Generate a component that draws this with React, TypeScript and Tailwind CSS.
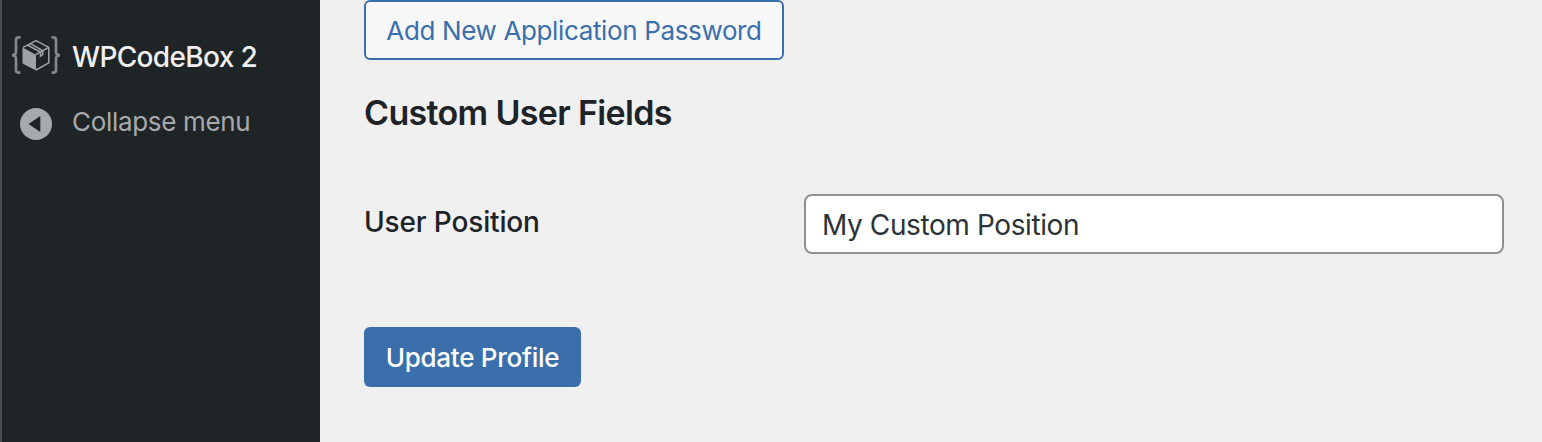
export default function App() {
  return (
    <div className="flex h-[442px] w-[1542px] overflow-hidden bg-[#f0f0f0] font-['Inter',sans-serif] text-[#1d2327]">
      <aside className="w-80 shrink-0 border-l-2 border-[#4a4e51] bg-[#1f2427] pt-[30px]">
        <a className="flex h-[52px] items-center pl-[10px] text-[28px] text-[#f0f0f1]">
          <svg width="48" height="40" viewBox="0 0 48 40" fill="none" className="shrink-0 overflow-visible">
            <path d="M8.5 1.4H6.8Q4 1.4 4 4V15.5Q4 19.2 0 19.2Q4 19.2 4 23V34Q4 36.7 6.8 36.7H8.5M39.5 1.4H41.2Q44 1.4 44 4V15.5Q44 19.2 48 19.2Q44 19.2 44 23V34Q44 36.7 41.2 36.7H39.5" stroke="#85888b" strokeWidth="2.7" />
            <path d="M10.5 11.5L24 18.8V34.5L10.5 27.5Z" fill="#a0a3a6" />
            <path d="M11 11.3L24 4.6L36.8 11.3V26.8L24 34M24 18.5L36.8 11.3" stroke="#a0a3a6" strokeWidth="1.5" strokeLinejoin="round" />
            <path d="M15.3 9L28.5 16V20.2L30.8 18.7V14.8L18.5 7.6" stroke="#a0a3a6" strokeWidth="1.5" />
          </svg>
          <span className="ml-3 pt-px font-medium tracking-[-0.66px]">WPCodeBox 2</span>
        </a>
        <a className="mt-[14px] flex h-[52px] items-center pl-[18px] text-[26px] text-[#a7aaad]">
          <svg width="32" height="32" viewBox="0 0 32 32" className="relative top-[2px]"><circle cx="16" cy="16" r="16" fill="#a7aaad" /><path d="M8.5 16L20.3 8V24Z" fill="#1f2427" /></svg>
          <span className="ml-5 pb-px tracking-[-0.32px]">Collapse menu</span>
        </a>
      </aside>
      <main className="flex flex-col items-start pl-11">
        <button className="h-[60px] w-[420px] whitespace-nowrap rounded-md border-2 border-[#3b6fac] bg-[#f6f7f7] text-[26px] tracking-[-0.36px] text-[#3b6fac]">Add New Application Password</button>
        <h2 className="mt-8 text-[34px] font-semibold leading-[42px] tracking-[-0.66px]">Custom User Fields</h2>
        <div className="mt-[60px] flex h-[60px] items-center">
          <label className="w-[440px] pb-1 text-[28px] font-medium tracking-[-0.15px]">User Position</label>
          <input className="h-[60px] w-[700px] rounded-lg border-2 border-[#8c8f94] bg-white px-4 pt-[2px] text-[28px] tracking-[-0.4px] text-[#2c3338]" defaultValue="My Custom Position" />
        </div>
        <button className="mt-[73px] h-[60px] w-[217px] whitespace-nowrap rounded-md bg-[#3b6fac] text-[26px] font-medium tracking-[-0.27px] text-white">Update Profile</button>
      </main>
    </div>
  );
}
